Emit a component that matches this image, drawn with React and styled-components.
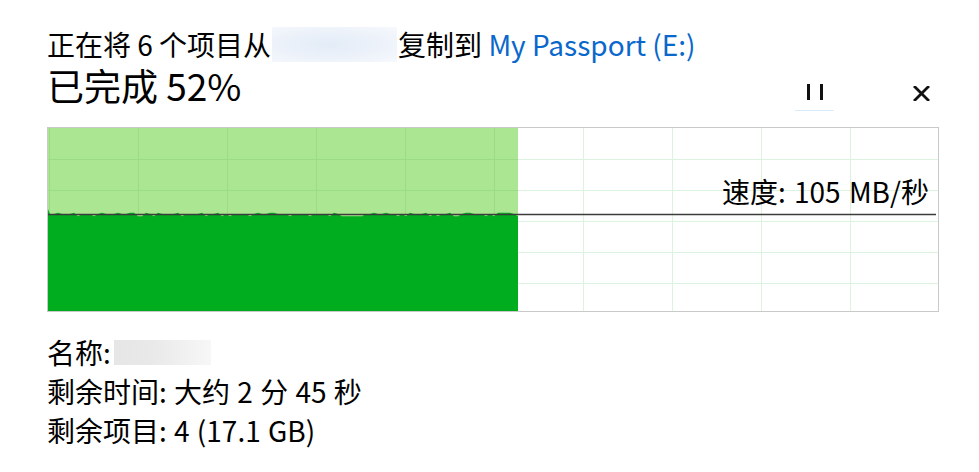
import React from "react";
import styled, { createGlobalStyle } from "styled-components";

const GlobalStyle = createGlobalStyle`
  html, body {
    margin: 0;
    padding: 0;
    background: #fff;
  }
  body {
    font-family: "Noto Sans CJK SC", "Noto Sans", sans-serif;
    color: #000;
  }
`;

const Dialog = styled.div`
  width: 979px;
  height: 472px;
  box-sizing: border-box;
  padding: 27px 38px 0 47px;
  overflow: hidden;
`;

const Line = styled.div`
  display: flex;
  align-items: center;
  font-size: 28px;
  line-height: ${(p) => p.lh || 35}px;
  height: ${(p) => p.lh || 35}px;
  word-spacing: ${(p) => p.ws || 0}px;
  white-space: pre;
`;

const Redacted = styled.span`
  display: inline-block;
  width: ${(p) => p.w}px;
  height: ${(p) => p.h}px;
  margin: 0 ${(p) => p.mr || 0}px 0 ${(p) => p.ml || 0}px;
  background: ${(p) => p.bg};
`;

const Link = styled.span`
  color: #0a68cc;
`;

const TitleRow = styled.div`
  display: flex;
  align-items: flex-start;
  justify-content: space-between;
  height: 49px;
`;

const Title = styled.div`
  font-size: 37px;
  line-height: 46px;
`;

const Controls = styled.div`
  display: flex;
  align-items: stretch;
  gap: 68px;
  height: 49px;
`;

const IconButton = styled.button`
  width: 39px;
  height: 49px;
  padding: 0 0 ${(p) => p.pb}px;
  border: none;
  background: transparent;
  display: flex;
  align-items: flex-end;
  justify-content: center;
  border-bottom: 1px solid ${(p) => (p.focused ? "#d8ecfa" : "transparent")};
  box-sizing: border-box;
`;

const Chart = styled.div`
  position: relative;
  margin-top: 16px;
  width: 892px;
  height: 185px;
  box-sizing: border-box;
  border: 1px solid #c9c9c9;
  background: #fff;
`;

const SpeedLabel = styled.div`
  position: absolute;
  right: 9px;
  top: 46px;
  font-size: 28px;
  line-height: 35px;
  word-spacing: 2px;
  white-space: pre;
`;

const Details = styled.div`
  margin-top: 21px;
  display: flex;
  flex-direction: column;
`;

const W = 890;
const H = 183;
const DONE = 470;
const LINE_Y = 86;

function edgePoints() {
  const pts = [[0, 81]];
  let seed = 7;
  for (let x = 2; x <= DONE; x += 4) {
    seed = (seed * 9301 + 49297) % 233280;
    const r = seed / 233280;
    let y = LINE_Y;
    if (r > 0.72) y = LINE_Y + 2.2;
    else if (r < 0.22) y = LINE_Y - 1.2;
    pts.push([x, y]);
  }
  return pts;
}

const SpeedGraph = () => {
  const cols = [];
  for (let x = 1; x < W; x += 89) cols.push(x);
  const rows = [31, 62, 93, 124, 155];
  const edge = edgePoints();
  const poly = [...edge, [DONE, H], [0, H]].map((p) => p.join(",")).join(" ");
  return (
    <svg width={W} height={H} style={{ display: "block" }}>
      <rect x="0" y="0" width={W} height={H} fill="#fff" />
      {cols.map((x) => (
        <line key={"c" + x} x1={x + 0.5} y1="0" x2={x + 0.5} y2={H} stroke="#dcf3df" />
      ))}
      {rows.map((y) => (
        <line key={"r" + y} x1="0" y1={y + 0.5} x2={W} y2={y + 0.5} stroke="#dcf3df" />
      ))}
      <rect x="0" y="0" width={DONE} height={H} fill="#abe693" />
      {cols
        .filter((x) => x < DONE)
        .map((x) => (
          <line key={"gc" + x} x1={x + 0.5} y1="0" x2={x + 0.5} y2={H} stroke="#9bdc84" />
        ))}
      {rows.map((y) => (
        <line key={"gr" + y} x1="0" y1={y + 0.5} x2={DONE} y2={y + 0.5} stroke="#9bdc84" />
      ))}
      <polygon points={poly} fill="#00ad1f" />
      <line x1="0" y1={LINE_Y + 0.5} x2={W - 2} y2={LINE_Y + 0.5} stroke="#3c3c3c" strokeWidth="1.4" />
    </svg>
  );
};

const PauseIcon = () => (
  <svg width="16" height="16" viewBox="0 0 16 16">
    <rect x="0" y="0" width="3" height="16" fill="#111" />
    <rect x="13" y="0" width="3" height="16" fill="#111" />
  </svg>
);

const CloseIcon = () => (
  <svg width="17" height="15" viewBox="0 0 17 15">
    <path d="M2 1 L15 14 M15 1 L2 14" stroke="#111" strokeWidth="2.8" strokeLinecap="square" />
  </svg>
);

export default function App() {
  return (
    <>
      <GlobalStyle />
      <Dialog>
        <Line>
          正在将 6 个项目从
          <Redacted
            w={125}
            h={35}
            ml={1}
            mr={1}
            bg="radial-gradient(ellipse at 45% 50%, #e3ecf7 0%, #edf2fa 55%, #f6f9fd 100%)"
          />
          复制到 <Link>My Passport (E:)</Link>
        </Line>
        <TitleRow>
          <Title>已完成 52%</Title>
          <Controls>
            <IconButton focused pb={10} aria-label="暂停">
              <PauseIcon />
            </IconButton>
            <IconButton pb={9} aria-label="关闭">
              <CloseIcon />
            </IconButton>
          </Controls>
        </TitleRow>
        <Chart>
          <SpeedGraph />
          <SpeedLabel>速度: 105 MB/秒</SpeedLabel>
        </Chart>
        <Details>
          <Line lh={39}>
            名称:
            <Redacted
              w={97}
              h={25}
              ml={3}
              bg="linear-gradient(90deg, #e6e6e6 0%, #e9e9e9 40%, #f7f7f7 100%)"
            />
          </Line>
          <Line lh={39} ws={1}>剩余时间: 大约 2 分 45 秒</Line>
          <Line lh={39} ws={1}>剩余项目: 4 (17.1 GB)</Line>
        </Details>
      </Dialog>
    </>
  );
}
